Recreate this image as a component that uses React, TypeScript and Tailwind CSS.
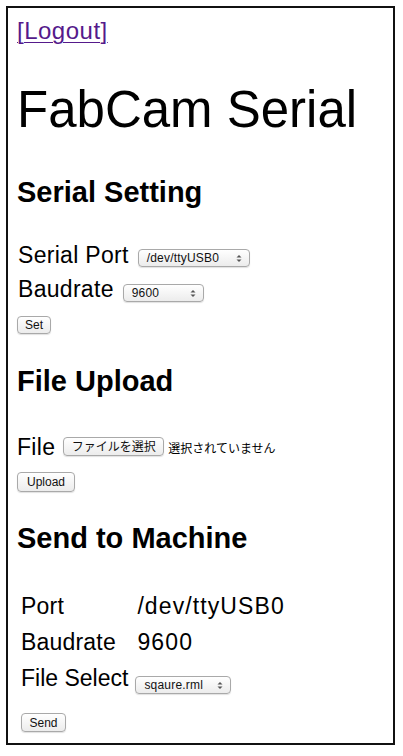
import React from 'react'

const ui = "font-['Liberation_Sans','Noto_Sans_CJK_JP',sans-serif]"

function Arrows() {
  return (
    <svg width="6" height="9" viewBox="0 0 6 9" className="shrink-0">
      <path d="M0.5 3.5 L3 1 L5.5 3.5 Z" fill="#555" />
      <path d="M0.5 5.5 L3 8 L5.5 5.5 Z" fill="#555" />
    </svg>
  )
}

function Select({ value, width }: { value: string; width: string }) {
  return (
    <div
      className={`${width} h-[18px] flex items-center justify-between pl-[8px] pr-[7px] rounded-[4px] border border-[#a9a9a9] bg-gradient-to-b from-white to-[#ececec] shadow-[0_1px_1px_rgba(0,0,0,0.12)] text-[12px] tracking-[0.2px] leading-none text-[#111] ${ui}`}
    >
      <span>{value}</span>
      <Arrows />
    </div>
  )
}

function Button({ label, className }: { label: string; className: string }) {
  return (
    <div
      className={`${className} flex items-center justify-center rounded-[4px] border border-[#a9a9a9] bg-gradient-to-b from-white to-[#ececec] shadow-[0_1px_1px_rgba(0,0,0,0.12)] leading-none text-[#111] ${ui}`}
    >
      {label}
    </div>
  )
}

export default function App() {
  return (
    <div className="w-[403px] h-[756px] bg-white pt-[6px] pl-[6px] font-['Liberation_Sans',Arial,sans-serif] text-black">
      <div className="w-[389px] h-[739px] border-2 border-[#111] pl-[9px]">
        {/* header */}
        <a href="#" className="block mt-[9px] h-[28px] leading-[28px] text-[24px] tracking-[0.5px] text-[#551a8b] underline underline-offset-[3px] decoration-1 w-fit">
          [Logout]
        </a>
        <h1 className="mt-[37px] h-[56px] leading-[56px] text-[51px] font-normal">FabCam Serial</h1>

        {/* serial setting */}
        <h2 className="mt-[38px] h-[32px] leading-[32px] text-[29px] font-bold">Serial Setting</h2>
        <div className="mt-[32px] h-[30px] flex items-end gap-[9px]">
          <span className="leading-[30px] text-[23px] tracking-[0.3px] pl-[1px]">Serial Port</span>
          <div className="mb-[3px]"><Select value="/dev/ttyUSB0" width="w-[112px]" /></div>
        </div>
        <div className="mt-[4px] h-[30px] flex items-end gap-[9px]">
          <span className="leading-[30px] text-[23px] tracking-[0.3px] pl-[1px]">Baudrate</span>
          <div className="mb-[2px]"><Select value="9600" width="w-[81px]" /></div>
        </div>
        <Button label="Set" className="mt-[12px] w-[34px] h-[18px] text-[12px]" />

        {/* file upload */}
        <h2 className="mt-[31px] h-[32px] leading-[32px] text-[29px] font-bold">File Upload</h2>
        <div className="mt-[35px] h-[30px] flex items-end">
          <span className="leading-[30px] text-[23px] tracking-[0.3px] mr-[8px]">File</span>
          <Button label="ファイルを選択" className="mb-[6px] w-[101px] h-[19px] text-[12px]" />
          <span className={`mb-[7px] ml-[4px] text-[12px] leading-none ${ui}`}>選択されていません</span>
        </div>
        <Button label="Upload" className="mt-[10px] w-[58px] h-[20px] text-[12px]" />

        {/* send */}
        <h2 className="mt-[30px] h-[32px] leading-[32px] text-[29px] font-bold">Send to Machine</h2>
        <div className="mt-[34px] pl-[4px] grid grid-cols-[auto_1fr] gap-x-[7px] text-[23px]">
          <span className="leading-[36px] tracking-[0.2px]">Port</span>
          <span className="leading-[36px] pl-[2px] tracking-[1.1px]">/dev/ttyUSB0</span>
          <span className="leading-[36px] tracking-[0.2px]">Baudrate</span>
          <span className="leading-[36px] pl-[2px] tracking-[1.2px]">9600</span>
          <span className="leading-[36px]">File Select</span>
          <div className="flex items-end pb-[2px]"><Select value="sqaure.rml" width="w-[96px]" /></div>
        </div>
        <Button label="Send" className="mt-[17px] ml-[4px] w-[45px] h-[19px] text-[12px]" />
      </div>
    </div>
  )
}
